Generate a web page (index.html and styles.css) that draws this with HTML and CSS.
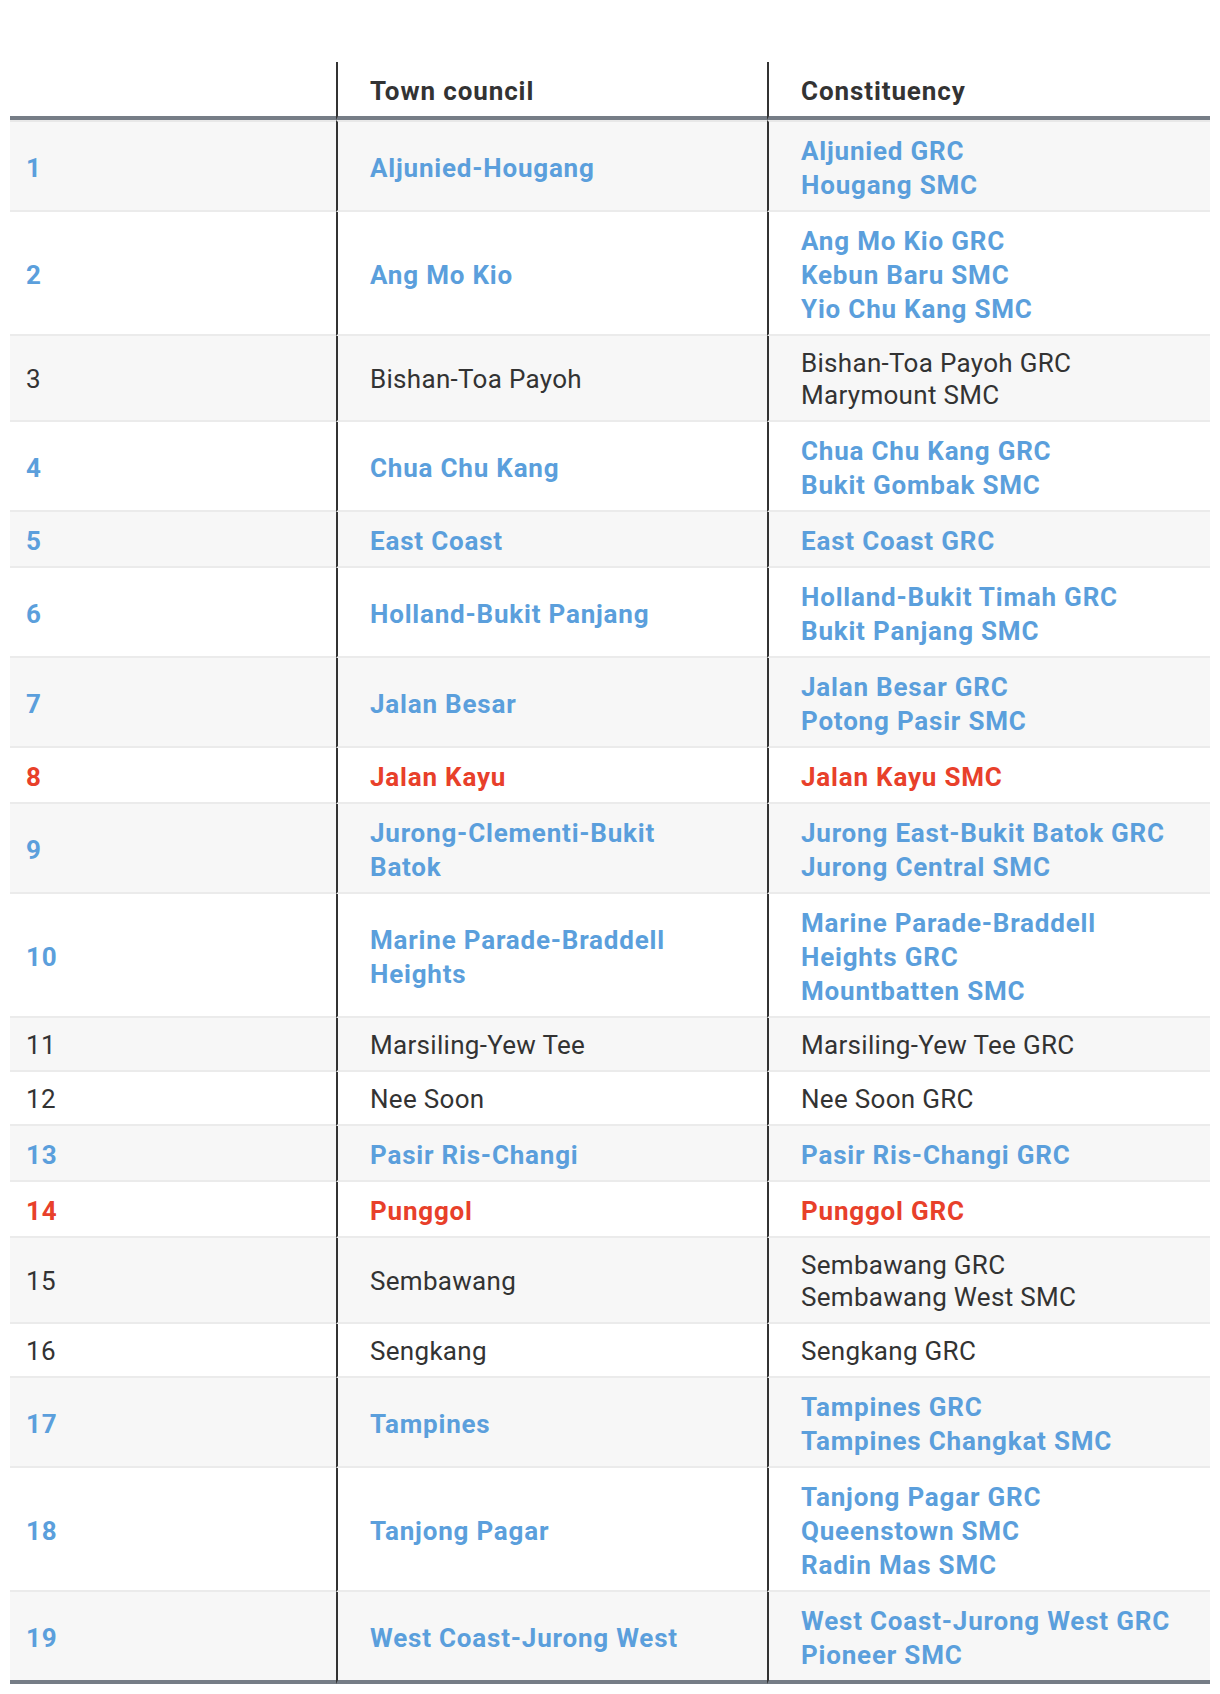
FILE: index.html
```html
<!DOCTYPE html>
<html lang="en">
<head>
<meta charset="utf-8">
<title>Town councils</title>
<link rel="stylesheet" href="styles.css">
</head>
<body>
<table class="tc">
  <colgroup>
    <col class="w1"><col class="w2"><col class="w3">
  </colgroup>
  <thead>
    <tr><th class="c1"></th><th class="c2">Town council</th><th class="c3">Constituency</th></tr>
  </thead>
  <tbody>
    <tr class="blue"><td class="c1">1</td><td class="c2">Aljunied-Hougang</td><td class="c3">Aljunied GRC<br>Hougang SMC</td></tr>
    <tr class="blue"><td class="c1">2</td><td class="c2">Ang Mo Kio</td><td class="c3">Ang Mo Kio GRC<br>Kebun Baru SMC<br>Yio Chu Kang SMC</td></tr>
    <tr class="plain"><td class="c1">3</td><td class="c2">Bishan-Toa Payoh</td><td class="c3">Bishan-Toa Payoh GRC<br>Marymount SMC</td></tr>
    <tr class="blue"><td class="c1">4</td><td class="c2">Chua Chu Kang</td><td class="c3">Chua Chu Kang GRC<br>Bukit Gombak SMC</td></tr>
    <tr class="blue"><td class="c1">5</td><td class="c2">East Coast</td><td class="c3">East Coast GRC</td></tr>
    <tr class="blue"><td class="c1">6</td><td class="c2">Holland-Bukit Panjang</td><td class="c3">Holland-Bukit Timah GRC<br>Bukit Panjang SMC</td></tr>
    <tr class="blue"><td class="c1">7</td><td class="c2">Jalan Besar</td><td class="c3">Jalan Besar GRC<br>Potong Pasir SMC</td></tr>
    <tr class="red"><td class="c1">8</td><td class="c2">Jalan Kayu</td><td class="c3">Jalan Kayu SMC</td></tr>
    <tr class="blue"><td class="c1">9</td><td class="c2">Jurong-Clementi-Bukit Batok</td><td class="c3">Jurong East-Bukit Batok GRC<br>Jurong Central SMC</td></tr>
    <tr class="blue"><td class="c1">10</td><td class="c2">Marine Parade-Braddell Heights</td><td class="c3">Marine Parade-Braddell Heights GRC<br>Mountbatten SMC</td></tr>
    <tr class="plain"><td class="c1">11</td><td class="c2">Marsiling-Yew Tee</td><td class="c3">Marsiling-Yew Tee GRC</td></tr>
    <tr class="plain"><td class="c1">12</td><td class="c2">Nee Soon</td><td class="c3">Nee Soon GRC</td></tr>
    <tr class="blue"><td class="c1">13</td><td class="c2">Pasir Ris-Changi</td><td class="c3">Pasir Ris-Changi GRC</td></tr>
    <tr class="red"><td class="c1">14</td><td class="c2">Punggol</td><td class="c3">Punggol GRC</td></tr>
    <tr class="plain"><td class="c1">15</td><td class="c2">Sembawang</td><td class="c3">Sembawang GRC<br>Sembawang West SMC</td></tr>
    <tr class="plain"><td class="c1">16</td><td class="c2">Sengkang</td><td class="c3">Sengkang GRC</td></tr>
    <tr class="blue"><td class="c1">17</td><td class="c2">Tampines</td><td class="c3">Tampines GRC<br>Tampines Changkat SMC</td></tr>
    <tr class="blue"><td class="c1">18</td><td class="c2">Tanjong Pagar</td><td class="c3">Tanjong Pagar GRC<br>Queenstown SMC<br>Radin Mas SMC</td></tr>
    <tr class="blue"><td class="c1">19</td><td class="c2">West Coast-Jurong West</td><td class="c3">West Coast-Jurong West GRC<br>Pioneer SMC</td></tr>
  </tbody>
</table>
</body>
</html>
```
FILE: styles.css
```css
html, body {
  margin: 0;
  padding: 0;
  background: #ffffff;
}

body {
  font-family: Roboto, "Liberation Sans", sans-serif;
  color: #333333;
}

.tc {
  width: 1200px;
  margin: 62px auto 0;
  border-collapse: separate;
  border-spacing: 0;
  table-layout: fixed;
  font-size: 26px;
}

.w1 { width: 326px; }
.w2 { width: 431px; }
.w3 { width: 443px; }

.tc th,
.tc td {
  text-align: left;
  vertical-align: middle;
  padding: 11px 32px 9px 0;
}

.tc th {
  font-weight: 700;
  line-height: 34px;
  letter-spacing: 0.9px;
  color: #333333;
  padding-top: 12px;
  padding-bottom: 8px;
  border-bottom: 4px solid #767d86;
}

.tc .c1 { padding-left: 16px; }
.tc .c2,
.tc .c3 {
  border-left: 2px solid #333333;
  padding-left: 32px;
}
.tc .c2 { padding-right: 46px; }

.tc td {
  border-bottom: 2px solid #ebebeb;
  line-height: 32px;
}

.tc tbody tr:first-child td { border-top: 2px solid #e8e8e8; }
.tc tbody tr:nth-child(odd) td { background: #f7f7f7; }
.tc tbody tr:last-child td { border-bottom: 4px solid #767d86; }

.tc tr.blue td,
.tc tr.red td {
  font-weight: 700;
  line-height: 34px;
  letter-spacing: 0.8px;
  padding-top: 12px;
  padding-bottom: 8px;
}

.tc tr.blue td { color: #5b9fdc; }
.tc tr.red td { color: #e8402a; }

.tc tr.plain td {
  color: #333333;
  font-weight: 400;
  letter-spacing: 0.3px;
}
```
